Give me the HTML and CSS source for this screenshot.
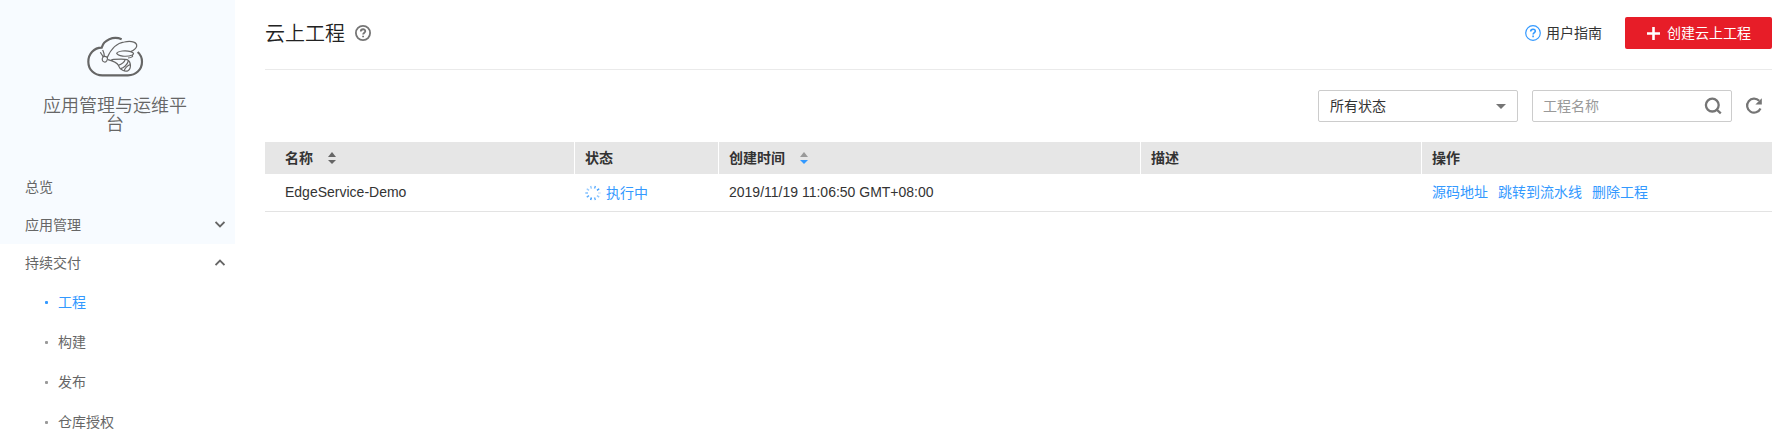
FILE: index.html
```html
<!DOCTYPE html>
<html lang="zh-CN">
<head>
<meta charset="utf-8">
<title>云上工程</title>
<link rel="stylesheet" href="styles.css">
</head>
<body>
<div class="app">
  <aside class="sidebar">
    <div class="brand">
      <svg class="brand-logo" viewBox="0 0 270 180" fill="none" stroke="#666" stroke-linecap="butt">
        <path stroke-width="6.5" d="M155 43C130 32 101 45 95 68C72 68 55 87 55 110C55 134 73 151 97 151H174C197 151 216 134 216 110C216 98 211 88 203 81"/>
        <g stroke-width="3.6">
          <path d="M111 99C121 76 137 54 163 51C187 46 202 53 200 64C198 72 191 76 182 80"/>
          <path d="M182 80C167 75 144 78 140 85C143 93 169 97 187 90C194 86 190 83 182 80"/>
          <path d="M187 90C190 94 186 98 174 99M114 104C128 108 141 112 145 121C149 134 166 142 174 137C184 132 184 110 172 104C158 100 137 103 124 104"/>
          <path d="M145 121C151 119 163 112 166 103M152 131C161 129 172 119 175 108M163 138C163 130 173 121 181 119"/>
          <path d="M99 96C95 101 96 110 103 111C109 113 114 104 112 97C107 94 103 93 99 96ZM102 94C104 85 100 80 98 75M99 95C96 88 93 86 91 82"/>
        </g>
      </svg>
      <div class="brand-name">应用管理与运维平台</div>
    </div>
    <nav class="nav">
      <div class="nav-item">总览</div>
      <div class="nav-item">应用管理
        <svg class="chevron" viewBox="0 0 10 7"><path d="M.5 1 5 5.5 9.5 1"/></svg>
      </div>
      <div class="nav-group">
        <div class="nav-item">持续交付
          <svg class="chevron" viewBox="0 0 10 7"><path d="M.5 6 5 1.5 9.5 6"/></svg>
        </div>
        <div class="sub-item active">工程</div>
        <div class="sub-item">构建</div>
        <div class="sub-item">发布</div>
        <div class="sub-item">仓库授权</div>
      </div>
    </nav>
  </aside>
  <main class="main">
    <header class="page-header">
      <h1 class="page-title">云上工程</h1>
      <svg class="help" viewBox="0 0 16 16"><circle cx="8" cy="8" r="7.1" stroke-width="1.8"/><path stroke-width="1.8" d="M5.8 6.6C5.8 3.5 10.3 3.6 10.3 6.2C10.3 7.7 8.1 7.7 8.1 9.6M8.1 10.7V12.3"/></svg>
      <a class="guide">
        <svg class="help" viewBox="0 0 16 16"><circle cx="8" cy="8" r="7.3" stroke-width="1.2"/><path stroke-width="1.6" d="M5.7 6.6C5.7 3.5 10.3 3.6 10.3 6.2C10.3 7.7 8.1 7.7 8.1 9.6M8.1 10.6V12.2"/></svg>
        <span>用户指南</span>
      </a>
      <button class="create">
        <svg class="plus" viewBox="0 0 13 13"><path d="M6.5 0V13M0 6.5H13"/></svg>
        <span>创建云上工程</span>
      </button>
    </header>
    <div class="toolbar">
      <div class="field select"><span>所有状态</span><svg class="caret" viewBox="0 0 10 5"><path d="M0 0H10L5 5Z"/></svg></div>
      <div class="field search"><span>工程名称</span><svg class="search-icon" viewBox="0 0 18 18"><circle cx="8.3" cy="8.1" r="6.4"/><path d="M12.4 12.4 16.8 16.4"/></svg></div>
      <svg class="refresh" viewBox="0 0 18 18"><path class="arc" d="M14.2 3.8A7 7 0 1 0 15.5 11.5"/><path class="head" d="M16.8 1.2V7.6H10.4Z"/></svg>
    </div>
    <div class="table">
      <div class="row head-row">
        <div class="cell">名称<svg class="sort" viewBox="0 0 8 12"><path d="M0 5 4 0 8 5Z"/><path d="M0 8H8L4 12Z"/></svg></div>
        <div class="cell">状态</div>
        <div class="cell">创建时间<svg class="sort sort-desc" viewBox="0 0 8 12"><path d="M0 5 4 0 8 5Z"/><path d="M0 8H8L4 12Z"/></svg></div>
        <div class="cell">描述</div>
        <div class="cell">操作</div>
      </div>
      <div class="row body-row">
        <div class="cell">EdgeService-Demo</div>
        <div class="cell status">
          <svg class="spinner" viewBox="0 0 16 16">
            <path opacity=".55" d="M6.4 3.6 5.6 1"/><path opacity=".8" d="M9.5 3.6 10.4 1"/>
            <path opacity=".95" d="M12 5.4 14.2 3.8"/><path opacity=".25" d="M13 8H15.7"/>
            <path opacity=".55" d="M12 10.7 14.2 12.2"/><path opacity=".8" d="M9.5 12.5 10.4 15"/>
            <path d="M6.4 12.5 5.6 15"/><path opacity=".8" d="M4 10.7 1.8 12.2"/>
            <path opacity=".65" d="M3 8H.3"/><path opacity=".5" d="M4 5.4 1.8 3.8"/>
          </svg>
          <span>执行中</span>
        </div>
        <div class="cell">2019/11/19 11:06:50 GMT+08:00</div>
        <div class="cell"></div>
        <div class="cell actions"><a>源码地址</a><a>跳转到流水线</a><a>删除工程</a></div>
      </div>
    </div>
  </main>
</div>
</body>
</html>
```
FILE: styles.css
```css
* { box-sizing: border-box; }
body {
  margin: 0;
  background: #fff;
  color: #333;
  font: 14px/20px "Liberation Sans", "Noto Sans CJK SC", sans-serif;
}
.app { display: flex; height: 442px; overflow: hidden; }
svg { display: block; flex: none; }

.sidebar { width: 235px; flex: none; background: #f7fbff; color: #666; }
.brand { height: 168px; padding-top: 25px; }
.brand-logo { width: 90px; height: 60px; margin-left: 70px; }
.brand-name {
  width: 148px;
  margin: 12px 0 0 41px;
  font-size: 18px;
  line-height: 18px;
  font-weight: 350;
  color: #666;
  text-align: center;
}
.nav-item {
  display: flex;
  align-items: center;
  justify-content: space-between;
  height: 38px;
  padding: 0 10px 0 25px;
}
.nav-group { background: #fff; height: 198px; }
.chevron {
  width: 10px;
  height: 7px;
  margin-bottom: 2px;
  fill: none;
  stroke: #666;
  stroke-width: 1.9;
}
.sub-item { display: flex; align-items: center; height: 40px; padding-left: 45px; }
.sub-item::before {
  content: "";
  width: 3px;
  height: 3px;
  margin-right: 10px;
  border-radius: 1px;
  background: #999;
}
.active { color: #3399ff; }
.active::before { background: #3399ff; }

.main { flex: 1; padding: 0 12px 0 30px; }
.page-header {
  display: flex;
  align-items: center;
  height: 70px;
  padding-bottom: 3px;
  border-bottom: 1px solid #eaeaea;
}
.page-title { margin: 1px 10px 0 0; font-size: 20px; line-height: 28px; font-weight: 350; color: #222; }
.help { width: 16px; height: 16px; fill: none; stroke: #757575; }
.guide { display: flex; align-items: center; gap: 5px; margin-left: auto; }
.guide .help { stroke: #3399ff; }
.create {
  display: flex;
  align-items: center;
  gap: 7px;
  width: 147px;
  height: 32px;
  margin-left: 23px;
  padding: 0 0 0 22px;
  border: 0;
  border-radius: 2px;
  background: #e71d28;
  color: #fff;
  font: inherit;
}
.plus { width: 13px; height: 13px; stroke: #fff; stroke-width: 2.6; }

.toolbar { display: flex; align-items: center; justify-content: flex-end; height: 72px; padding-right: 9px; }
.field {
  display: flex;
  align-items: center;
  justify-content: space-between;
  width: 200px;
  height: 32px;
  margin-right: 14px;
  border: 1px solid #ccc;
  border-radius: 2px;
}
.select { padding: 0 11px; }
.caret { width: 10px; height: 5px; fill: #757575; }
.search { padding: 0 9px 0 10px; margin-right: 13px; color: #999; }
.search-icon { width: 18px; height: 18px; fill: none; stroke: #757575; stroke-width: 2.3; }
.refresh { width: 18px; height: 18px; }
.arc { fill: none; stroke: #757575; stroke-width: 2.2; }
.head { fill: #757575; }

.row { display: grid; grid-template-columns: 310px 144px 422px 281px 1fr; }
.cell { display: flex; align-items: center; padding-left: 10px; }
.cell:first-child { padding-left: 20px; }
.head-row { height: 32px; background: #e6e6e6; font-weight: 700; }
.head-row .cell + .cell { margin-left: -1px; border-left: 1px solid #fff; }
.body-row { height: 38px; border-bottom: 1px solid #e3e3e3; }
.body-row .cell { padding-bottom: 2px; }
.body-row .status { gap: 5px; padding-bottom: 0; color: #3399ff; }
.sort { width: 8px; height: 12px; margin-left: 15px; fill: #666; }
.sort-desc { fill: #999; }
.sort-desc path + path { fill: #3399ff; }
.spinner { width: 16px; height: 16px; stroke: #3399ff; stroke-width: 1.4; }
.actions { gap: 10px; color: #3399ff; }
```
